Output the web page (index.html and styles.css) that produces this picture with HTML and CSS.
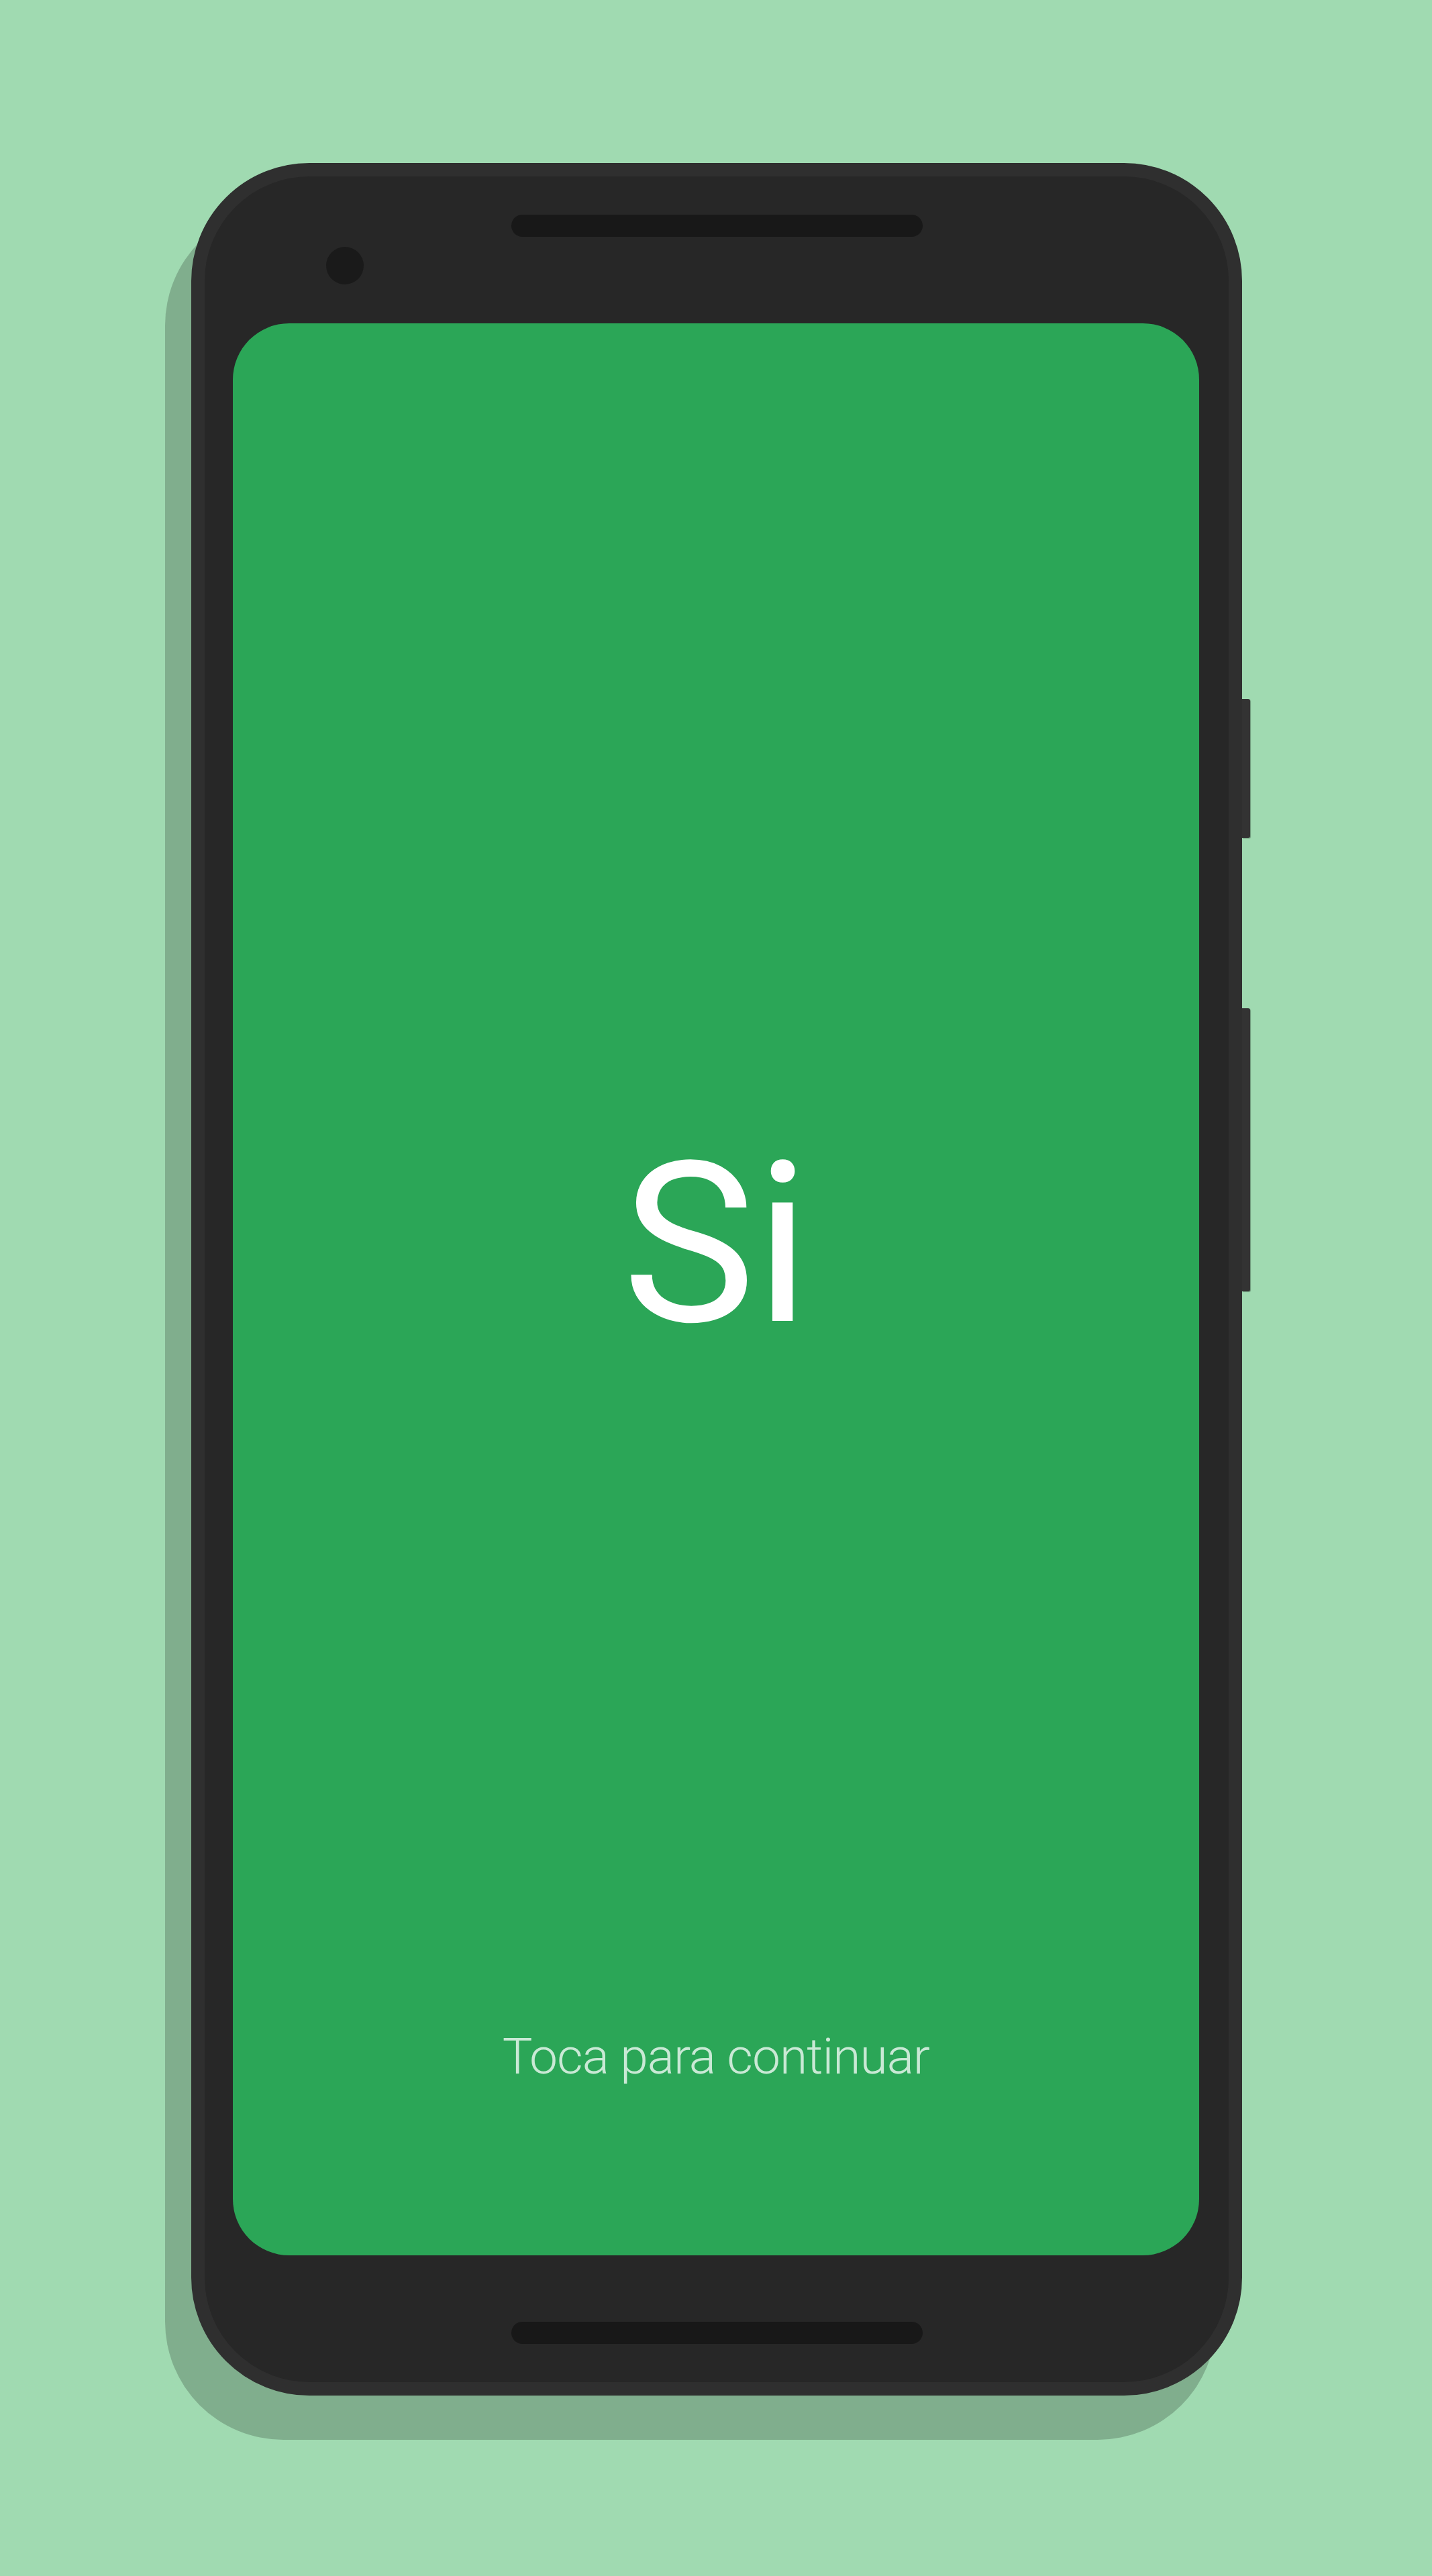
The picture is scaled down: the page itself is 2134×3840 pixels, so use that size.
FILE: index.html
```html
<!DOCTYPE html>
<html lang="es">
<head>
<meta charset="utf-8">
<title>Si</title>
<link rel="stylesheet" href="styles.css">
</head>
<body>
<div class="stage">
  <div class="phone">
    <div class="side-btn side-btn-power"></div>
    <div class="side-btn side-btn-volume"></div>
    <div class="bezel-top">
      <div class="camera"></div>
      <div class="speaker"></div>
    </div>
    <div class="screen">
      <div class="answer">Si</div>
      <div class="hint">Toca para continuar</div>
    </div>
    <div class="bezel-bottom">
      <div class="speaker"></div>
    </div>
  </div>
</div>
</body>
</html>
```

FILE: styles.css
```css
html, body {
  margin: 0;
  padding: 0;
}

body {
  background: #a0dab1;
  font-family: Roboto, "Noto Sans", "Liberation Sans", sans-serif;
}

.stage {
  width: 2134px;
  height: 3840px;
  box-sizing: border-box;
  padding-top: 243px;
  display: flex;
  justify-content: center;
  align-items: flex-start;
}

.phone {
  position: relative;
  box-sizing: border-box;
  width: 1566px;
  height: 3328px;
  margin-left: 2px;
  border: 20px solid #2f2f2f;
  border-radius: 176px;
  background: #272727;
  box-shadow: -39px 66px 0 rgba(0, 0, 0, 0.2);
  display: flex;
  flex-direction: column;
}

.side-btn {
  position: absolute;
  right: -32px;
  width: 12px;
  background: #333333;
  border-radius: 0 3px 3px 0;
  box-shadow: 1px 1px 1px rgba(0, 0, 0, 0.3);
}

.side-btn-power {
  top: 779px;
  height: 207px;
}

.side-btn-volume {
  top: 1240px;
  height: 422px;
}

.bezel-top {
  position: relative;
  height: 219px;
  flex: none;
}

.camera {
  position: absolute;
  left: 181px;
  top: 105px;
  width: 56px;
  height: 56px;
  border-radius: 50%;
  background: #1a1a1a;
}

.speaker {
  width: 613px;
  height: 33px;
  margin: 0 auto;
  border-radius: 17px;
  background: #181818;
}

.bezel-top .speaker {
  margin-top: 57px;
}

.screen {
  flex: none;
  height: 2880px;
  margin: 0 44px 0 42px;
  border-radius: 84px;
  background: #2ba657;
  box-sizing: border-box;
  padding: 1206px 0 259px;
  display: flex;
  flex-direction: column;
  align-items: center;
}

.answer {
  color: #ffffff;
  font-size: 334px;
  line-height: 1;
  font-weight: 400;
}

.hint {
  margin-top: auto;
  color: rgba(255, 255, 255, 0.75);
  font-size: 75px;
  line-height: 1;
  font-weight: 300;
  letter-spacing: -1px;
}

.bezel-bottom {
  flex: none;
}

.bezel-bottom .speaker {
  margin-top: 99px;
}
```
